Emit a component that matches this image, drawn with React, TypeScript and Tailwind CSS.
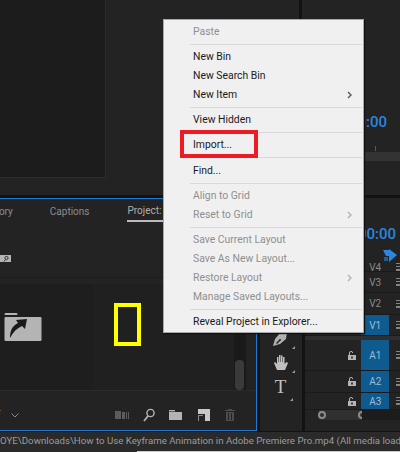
const menuItems = [
  { label: "Paste", disabled: true, sep: true },
  { label: "New Bin" },
  { label: "New Search Bin" },
  { label: "New Item", arrow: true, sep: true },
  { label: "View Hidden", sep: true },
  { label: "Import...", sep: true },
  { label: "Find...", sep: true },
  { label: "Align to Grid", disabled: true },
  { label: "Reset to Grid", disabled: true, arrow: true, sep: true },
  { label: "Save Current Layout", disabled: true },
  { label: "Save As New Layout...", disabled: true },
  { label: "Restore Layout", disabled: true, arrow: true },
  { label: "Manage Saved Layouts...", disabled: true, sep: true },
  { label: "Reveal Project in Explorer..." },
]

function Chevron({ disabled }: { disabled?: boolean }) {
  return (
    <svg width="6" height="8" viewBox="0 0 6 8" fill="none" className="mr-[8px]">
      <path d="M1 1l3 3-3 3" stroke={disabled ? "#b4b4b4" : "#555555"} strokeWidth="1.4" />
    </svg>
  )
}

function ContextMenu() {
  return (
    <div className="absolute left-[163px] top-[19px] flex h-[314px] w-[201px] flex-col border border-[#a8a8a8] bg-[#f0f0f0] pt-[2px] text-[10.4px] shadow-[1px_1px_1px_#111]">
      {menuItems.map((item) => (
        <div key={item.label}>
          <div className="flex h-[19px] items-center justify-between pl-[29px] pr-[2px]">
            <span className={item.disabled ? "text-[#8f8f8f]" : "text-[#1a1a1a]"}>{item.label}</span>
            {item.arrow && <Chevron disabled={item.disabled} />}
          </div>
          {item.sep && (
            <div className="flex h-[6.25px] items-center pl-[26px] pr-[1px]">
              <div className="h-px w-full bg-[#d9d9d9]" />
            </div>
          )}
        </div>
      ))}
    </div>
  )
}

function FolderShortcut() {
  return (
    <svg width="38" height="29" viewBox="0 0 38 29">
      <rect x="0.5" y="0" width="13" height="2" rx="1" fill="#b4b4b4" />
      <rect x="0.5" y="4" width="37" height="24" rx="1" fill="#b4b4b4" />
      <path d="M6 25c0-7 2-12 8-15l-2-3 11-1-2 10-3-3c-5 2-9 6-12 12z" fill="#1a1a1a" />
    </svg>
  )
}

function ProjectToolbar() {
  return (
    <div className="relative flex h-[38px] items-center pt-[10px]">
      <span className="ml-[-3px] text-[10px] text-[#9a9a9a]">ƒ</span>
      <svg width="8" height="5" viewBox="0 0 8 5" fill="none" className="ml-[11px]">
        <path d="M0.5 0.5L4 4l3.5-3.5" stroke="#8a8a8a" strokeWidth="1" />
      </svg>
      <div className="ml-auto mr-[21px] flex items-center gap-[14px]">
        <svg width="14" height="8" viewBox="0 0 14 8" fill="#5c5c5c">
          <rect x="0" y="0" width="6" height="8" />
          <rect x="7" y="1" width="3" height="7" />
          <rect x="11" y="1" width="1" height="7" />
          <rect x="13" y="1" width="1" height="7" />
        </svg>
        <svg width="12" height="14" viewBox="0 0 12 14" fill="none" stroke="#b4b4b4" strokeWidth="1.4">
          <circle cx="7.5" cy="5" r="3.6" />
          <path d="M5 8L1 13" strokeWidth="1.8" />
        </svg>
        <svg width="13" height="10" viewBox="0 0 13 10" fill="#b4b4b4">
          <rect x="0" y="0" width="6" height="1.4" />
          <rect x="0" y="2" width="13" height="8" />
        </svg>
        <svg width="12" height="12" viewBox="0 0 12 12" className="ml-[2px]">
          <path d="M0 0h12v12H7V5H0z" fill="#c8c8c8" />
          <path d="M0 6h5v1H1v5H0z" fill="#8a8a8a" />
        </svg>
        <svg width="10" height="12" viewBox="0 0 10 12" fill="#4c4c4c" className="ml-[1px]">
          <path d="M0 1h3V0h4v1h3v1H0zM1 3h8v9H1zM3 4v7h1V4zm3 0v7h1V4z" fillRule="evenodd" />
        </svg>
      </div>
    </div>
  )
}

function ProjectPanel() {
  return (
    <div className="flex h-[233px] w-[257px] flex-col overflow-hidden border-b border-r border-t border-[#1f78d1] bg-[#232323] text-[#8d8d8d]">
      <div className="flex h-[24px] items-center text-[10px]">
        <span className="ml-[-19px]">History</span>
        <span className="ml-[37px]">Captions</span>
        <span className="ml-[38px] mt-[2px] w-[38px] whitespace-nowrap border-b-2 border-[#bcbcbc] leading-[18px] text-[#b0b0b0]">Project: U</span>
      </div>
      <div className="flex h-[55px] items-end border-b border-[#1c1c1c] pb-[14px]">
        <svg width="12" height="8" viewBox="0 0 12 8">
          <rect x="0" y="0" width="11" height="7" fill="#b4b4b4" />
          <circle cx="6.5" cy="3" r="1.6" fill="none" stroke="#333333" />
          <path d="M5.5 4.5L4 6.5" stroke="#333333" />
        </svg>
      </div>
      <div className="flex h-[113px] border-b border-[#2b2b2b] pt-[6px]">
        <div className="flex w-[93px] items-start bg-[#1e1e1e] pl-[4px] pt-[29px]">
          <FolderShortcut />
        </div>
        <div className="flex-1 bg-[#202020]" />
        <div className="relative w-[12px] bg-[#1a1a1a]">
          <div className="absolute bottom-0 left-[1px] h-[30px] w-[9px] rounded-[4px] bg-[#3a3a3a]" />
        </div>
        <div className="w-[10px]" />
      </div>
      <ProjectToolbar />
    </div>
  )
}

function ToolsPanel() {
  return (
    <div className="flex h-[233px] w-[42px] flex-col items-center justify-end gap-[4px] bg-[#232323] pb-[33px] pr-[1px]">
      <div className="relative">
        <svg width="15" height="15" viewBox="0 0 15 15" fill="#b0b0b0">
          <path d="M14 1l-1-1-6 2-5 6-2 7 7-2 6-5zM3 12l3-3a1 1 0 1 1 1 1l-3 3z" fillRule="evenodd" />
        </svg>
        <span className="absolute right-[-7px] bottom-[-3px] h-0 w-0 border-b-[3px] border-l-[3px] border-b-[#9a9a9a] border-l-transparent" />
      </div>
      <div className="relative mt-[4px]">
        <svg width="14" height="16" viewBox="0 0 14 16" fill="#c0c0c0">
          <path d="M3 16L0 9l1-1 2 2V3h1.5v5H5V1h1.5v7H7V1.5h1.5V8H9V3h1.5v7l2-2 1.5 1-3 7z" />
        </svg>
        <span className="absolute right-[-7px] bottom-[-3px] h-0 w-0 border-b-[3px] border-l-[3px] border-b-[#9a9a9a] border-l-transparent" />
      </div>
      <div className="relative mt-[2px]">
        <span className="block font-['Liberation_Serif',serif] text-[19px] leading-[22px] text-[#c0c0c0]">T</span>
        <span className="absolute right-[-7px] bottom-[-3px] h-0 w-0 border-b-[3px] border-l-[3px] border-b-[#9a9a9a] border-l-transparent" />
      </div>
    </div>
  )
}

function LockIcon() {
  return (
    <svg width="8" height="9" viewBox="0 0 8 9" fill="none">
      <path d="M1.5 4V2a1.6 1.6 0 0 1 3.2 0" stroke="#b4b4b4" strokeWidth="1" />
      <path d="M0 4h8v5H0z M3.2 5.5v2h1.6v-2z" fill="#b4b4b4" fillRule="evenodd" />
    </svg>
  )
}

function TrackRow({ label, active, lock, className }: { label: string; active?: boolean; lock?: boolean; className: string }) {
  return (
    <div className={`flex items-center border-b border-[#1a1a1a] ${className}`}>
      <div className="flex w-[57px] justify-end pr-[5px]">{lock && <LockIcon />}</div>
      <div className={`flex h-full w-[28px] items-center justify-center text-[10px] ${active ? "bg-[#0f5a8f] text-[#9ebdd4]" : "text-[#8a8a8a]"}`}>
        {label}
      </div>
      <svg width="4" height="8" viewBox="0 0 4 8" fill="#888888" className="ml-[7px]">
        <rect x="0" y="0" width="4" height="1" />
        <rect x="0" y="3" width="4" height="1" />
        <rect x="0" y="6" width="4" height="2" />
      </svg>
    </div>
  )
}

function Timeline() {
  return (
    <div className="flex h-[233px] flex-1 flex-col overflow-hidden bg-[#232323] pt-[25px]">
      <div className="h-[25px] pl-[53px] text-[15px] font-medium leading-[22px] text-[#2a86e0]">00:00</div>
      <div className="flex h-[15px] items-start pl-[78px] pt-[1px]">
        <svg width="14" height="13" viewBox="0 0 14 13">
          <path d="M0 1h6v6l-3 0z M6 0l8 6-8 7z" fill="#2a86e0" />
          <path d="M1 8h4v4H1z" fill="#1d5d9c" />
        </svg>
      </div>
      <TrackRow label="V4" className="h-[9px]" />
      <TrackRow label="V3" className="h-[21px]" />
      <TrackRow label="V2" className="h-[22px]" />
      <TrackRow label="V1" active className="h-[21px]" />
      <div className="h-[4px] bg-[#2f2f2f]" />
      <TrackRow label="A1" active lock className="h-[31px]" />
      <TrackRow label="A2" active lock className="h-[22px]" />
      <TrackRow label="A3" active lock className="h-[17px]" />
      <div className="flex h-[10px] items-center">
        <div className="ml-[14px] flex h-full w-[43px] items-center justify-between bg-[#303030]">
          <span className="ml-[-1px] h-[8px] w-[8px] rounded-full border-2 border-[#8c8c8c]" />
          <span className="mr-[-4px] h-[8px] w-[8px] rounded-full border-2 border-[#8c8c8c]" />
        </div>
        <div className="h-full flex-1 bg-[#1c1c1c]" />
      </div>
    </div>
  )
}

export default function App() {
  return (
    <div className="relative flex h-[452px] w-[400px] flex-col overflow-hidden bg-[#121212] font-['Roboto',sans-serif]">
      <div className="flex h-[195px] gap-[3px]">
        <div className="w-[299px] bg-[#232323]">
          <div className="h-[178px] w-[106px] border-b border-r border-[#2c2c2c] bg-[#1c1c1c]" />
        </div>
        <div className="flex-1 bg-[#232323]">
          <div className="ml-[47px] mt-[111px] text-[15px] font-medium leading-[22px] text-[#2a86e0]">00:00</div>
          <div className="ml-[73px] mt-[13px] h-[5px] w-px bg-[#5a5a5a]" />
          <div className="mt-px h-[9px] bg-[#333333]" />
        </div>
      </div>
      <div className="mt-[3px] flex gap-[3px]">
        <ProjectPanel />
        <ToolsPanel />
        <Timeline />
      </div>
      <div className="mt-[1px] flex h-[19px] items-center overflow-hidden whitespace-nowrap bg-[#2a2a2a] text-[9.7px] text-[#9c9c9c]">
        <span>OYE\Downloads\How to Use Keyframe Animation in Adobe Premiere Pro.mp4 (All media loaded)</span>
      </div>
      <div className="flex h-px">
        <div className="w-[137px] bg-[#2a2a2a]" />
        <div className="flex-1 bg-[#d8c8c0]" />
      </div>
      <ContextMenu />
      <div className="absolute left-[180px] top-[130px] h-[28px] w-[78px] border-[4px] border-[#ed1c24]" />
      <div className="absolute left-[114px] top-[303px] h-[43px] w-[27px] border-[4px] border-[#ffff00]" />
    </div>
  )
}
